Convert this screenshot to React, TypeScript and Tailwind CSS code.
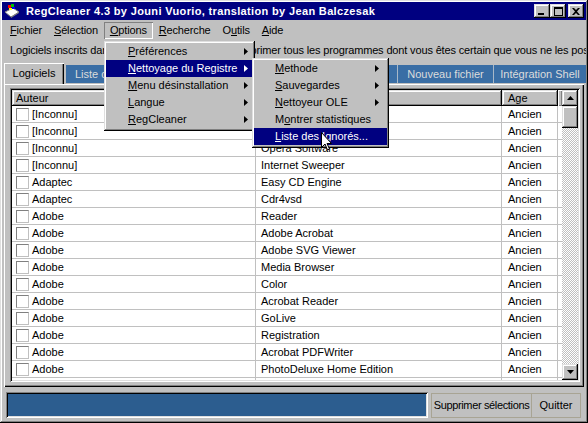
import React from "react";

// win98 bevels
const raised =
  "shadow-[inset_-1px_-1px_#000000,inset_1px_1px_#dfdfdf,inset_-2px_-2px_#808080,inset_2px_2px_#ffffff]";
const sunken =
  "shadow-[inset_1px_1px_#808080,inset_-1px_-1px_#ffffff,inset_2px_2px_#000000,inset_-2px_-2px_#dfdfdf]";
const thinRaised = "shadow-[inset_1px_1px_#ffffff,inset_-1px_-1px_#808080]";

function U({ children }: { children: React.ReactNode }) {
  return <span className="underline decoration-1 underline-offset-[1px]">{children}</span>;
}

function Arrow({ light }: { light?: boolean }) {
  return (
    <svg width="4" height="7" viewBox="0 0 4 7" className="shrink-0">
      <path d="M0 0 L4 3.5 L0 7 Z" fill={light ? "#ffffff" : "#000000"} />
    </svg>
  );
}

const rows: [string, string][] = [
  ["[Inconnu]", "Netscape Navigator"],
  ["[Inconnu]", "WinZip"],
  ["[Inconnu]", "Opera Software"],
  ["[Inconnu]", "Internet Sweeper"],
  ["Adaptec", "Easy CD Engine"],
  ["Adaptec", "Cdr4vsd"],
  ["Adobe", "Reader"],
  ["Adobe", "Adobe Acrobat"],
  ["Adobe", "Adobe SVG Viewer"],
  ["Adobe", "Media Browser"],
  ["Adobe", "Color"],
  ["Adobe", "Acrobat Reader"],
  ["Adobe", "GoLive"],
  ["Adobe", "Registration"],
  ["Adobe", "Acrobat PDFWriter"],
  ["Adobe", "PhotoDeluxe Home Edition"],
  ["Adobe", "Photoshop"],
];

const optionsItems: { label: React.ReactNode; active?: boolean }[] = [
  { label: <><U>P</U>références</> },
  { label: <><U>N</U>ettoyage du Registre</>, active: true },
  { label: <><U>M</U>enu désinstallation</> },
  { label: <><U>L</U>angue</> },
  { label: <><U>R</U>egCleaner</> },
];

const subItems: { label: React.ReactNode; arrow?: boolean; active?: boolean }[] = [
  { label: <><U>M</U>ethode</>, arrow: true },
  { label: <><U>S</U>auvegardes</>, arrow: true },
  { label: <><U>N</U>ettoyeur OLE</>, arrow: true },
  { label: <>M<U>o</U>ntrer statistiques</> },
  { label: <><U>L</U>iste des Ignorés...</>, active: true },
];

function TitleButton({ children }: { children: React.ReactNode }) {
  return (
    <div className={`w-[16px] h-[14px] bg-[#c0c0c0] flex items-center justify-center ${raised}`}>
      {children}
    </div>
  );
}

export default function App() {
  return (
    <div
      className={`relative w-[588px] h-[423px] overflow-hidden bg-[#c0c0c0] p-[2px] text-[11px] leading-none text-black font-['Liberation_Sans',Arial,sans-serif] ${raised}`}
    >
      {/* title bar */}
      <div className="h-[18px] bg-[#000080] flex items-center pl-[2px] pr-[2px]">
        <svg width="16" height="16" viewBox="0 0 16 16" className="shrink-0">
          <path d="M1 9 L9 5 L15 9 L7 14 Z" fill="#ffffff" stroke="#808080" strokeWidth="1" />
          <path d="M7 14 L15 9 L15 10 L7 15 Z" fill="#808080" />
          <rect x="4" y="2" width="3" height="3" fill="#ff0000" />
          <rect x="7" y="1" width="3" height="3" fill="#00c000" />
          <rect x="5" y="5" width="3" height="2" fill="#ffff00" />
          <rect x="8" y="4" width="3" height="2" fill="#0000ff" />
        </svg>
        <span className="ml-[6px] text-white font-bold text-[11px] tracking-[0.35px] whitespace-nowrap">
          RegCleaner 4.3 by Jouni Vuorio, translation by Jean Balczesak
        </span>
        <div className="ml-auto flex items-center">
          <TitleButton>
            <div className="w-[6px] h-[2px] bg-black mt-[6px] mr-[2px]" />
          </TitleButton>
          <TitleButton>
            <div className="w-[9px] h-[9px] border border-black border-t-2" />
          </TitleButton>
          <div className="w-[2px]" />
          <TitleButton>
            <svg width="8" height="7" viewBox="0 0 8 7">
              <path d="M0 0 H2 L4 2 L6 0 H8 L5 3.5 L8 7 H6 L4 5 L2 7 H0 L3 3.5 Z" fill="#000" />
            </svg>
          </TitleButton>
        </div>
      </div>

      {/* menu bar */}
      <div className="h-[20px] flex items-center pl-[2px] tracking-[-0.15px]">
        <div className="px-[6px] h-[17px] flex items-center"><U>F</U>ichier</div>
        <div className="px-[6px] h-[17px] flex items-center"><U>S</U>élection</div>
        <div className="px-[6px] h-[17px] flex items-center shadow-[inset_1px_1px_#808080,inset_-1px_-1px_#ffffff]"><U>O</U>ptions</div>
        <div className="px-[6px] h-[17px] flex items-center"><U>R</U>echerche</div>
        <div className="px-[6px] h-[17px] flex items-center">O<U>u</U>tils</div>
        <div className="px-[6px] h-[17px] flex items-center"><U>A</U>ide</div>
      </div>

      {/* info line */}
      <div className="h-[20px] flex items-center pl-[8px] whitespace-nowrap overflow-hidden tracking-[-0.15px]">
        Logiciels inscrits dans le registre. Vous pouvez supprimer tous les programmes dont vous êtes certain que vous ne les possédez plus.
      </div>

      {/* tabs */}
      <div className="h-[24px] flex items-end pl-[2px]">
        <div className="w-[60px] h-[21px] flex items-center justify-center bg-[#c0c0c0] shadow-[inset_1px_1px_#ffffff,inset_-1px_0_#000000,inset_-2px_0_#808080]">
          Logiciels
        </div>
        <div className="flex h-[18px] mb-[1px] bg-[#3a6ea5] text-[#dcdcdc] ml-[2px]">
          <div className="w-[106px] flex items-center pl-[9px] border-r border-[#a8b8c8]">Liste des ignorés</div>
          <div className="w-[96px] flex items-center pl-[9px] border-r border-[#a8b8c8]">Fichiers inutiles</div>
          <div className="w-[130px] flex items-center pl-[9px] border-r border-[#a8b8c8]">Démarrage</div>
          <div className="w-[96px] flex items-center justify-center border-r border-[#a8b8c8]">Nouveau fichier</div>
          <div className="w-[92px] flex items-center justify-center whitespace-nowrap">Intégration Shell</div>
        </div>
      </div>

      {/* tab panel */}
      <div className="h-[303px] mx-[2px] pl-[6px] pr-[4px] pt-[4px] shadow-[inset_1px_1px_#ffffff,inset_-1px_-1px_#000000,inset_-2px_-2px_#808080]">
        <div className={`h-[294px] bg-white p-[2px] flex ${sunken}`}>
          <div className="flex-1 flex flex-col overflow-hidden">
            <div className="h-[16px] flex shrink-0">
              <div className={`w-[244px] bg-[#c0c0c0] flex items-center pl-[4px] ${raised}`}>Auteur</div>
              <div className={`w-[246px] bg-[#c0c0c0] flex items-center pl-[5px] ${raised}`}>Nom</div>
              <div className={`w-[56px] bg-[#c0c0c0] flex items-center pl-[6px] ${raised}`}>Age</div>
              <div className={`flex-1 bg-[#c0c0c0] ${thinRaised}`} />
            </div>
            {rows.map(([author, name], i) => (
              <div key={i} className="h-[17px] flex shrink-0 border-b border-[#c0c0c0]">
                <div className="w-[244px] flex items-center pl-[4px] gap-[3px] border-r border-[#c0c0c0]">
                  <div className="w-[13px] h-[13px] bg-white border border-[#808080] border-b-[#c0c0c0] border-r-[#c0c0c0]" />
                  {author}
                </div>
                <div className="w-[246px] flex items-center pl-[5px] border-r border-[#c0c0c0]">{name}</div>
                <div className="w-[56px] flex items-center pl-[6px] border-r border-[#c0c0c0]">Ancien</div>
                <div className="flex-1" />
              </div>
            ))}
          </div>
          {/* scrollbar */}
          <div className="w-[16px] flex flex-col bg-[repeating-conic-gradient(#c0c0c0_0%_25%,#ffffff_0%_50%)] bg-size-[2px_2px]">
            <div className={`h-[16px] bg-[#c0c0c0] flex items-center justify-center ${raised}`}>
              <svg width="7" height="4" viewBox="0 0 7 4"><path d="M3.5 0 L7 4 H0 Z" fill="#000" /></svg>
            </div>
            <div className={`h-[22px] bg-[#c0c0c0] ${raised}`} />
            <div className="flex-1" />
            <div className={`h-[16px] bg-[#c0c0c0] flex items-center justify-center ${raised}`}>
              <svg width="7" height="4" viewBox="0 0 7 4"><path d="M0 0 H7 L3.5 4 Z" fill="#000" /></svg>
            </div>
          </div>
        </div>
      </div>

      {/* bottom bar */}
      <div className="mt-[5px] h-[27px] flex pl-[4px]">
        <div className={`w-[422px] h-[26px] bg-[#2c5d8f] ${sunken}`} />
        <div className="ml-[3px] flex h-[25px] mt-[1px] whitespace-nowrap">
          <div className="w-[101px] flex items-center justify-center border border-[#a8a494] tracking-[-0.35px]">Supprimer sélections</div>
          <div className="w-[49px] flex items-center justify-center border border-l-0 border-[#a8a494]">Quitter</div>
        </div>
      </div>

      {/* Options dropdown */}
      <div className={`absolute left-[104px] top-[41px] w-[151px] h-[90px] bg-[#c0c0c0] p-[2px] ${raised}`}>
        {optionsItems.map((it, i) => (
          <div
            key={i}
            className={`h-[17px] flex items-center pl-[22px] pr-[5px] ${it.active ? "bg-[#000080] text-white" : ""}`}
          >
            <span className="flex-1 whitespace-nowrap">{it.label}</span>
            <Arrow light={it.active} />
          </div>
        ))}
      </div>

      {/* submenu */}
      <div className={`absolute left-[252px] top-[58px] w-[137px] h-[90px] bg-[#c0c0c0] p-[2px] ${raised}`}>
        {subItems.map((it, i) => (
          <div
            key={i}
            className={`h-[17px] flex items-center pl-[21px] pr-[8px] ${it.active ? "bg-[#000080] text-white" : ""}`}
          >
            <span className="flex-1 whitespace-nowrap">{it.label}</span>
            {it.arrow && <Arrow />}
          </div>
        ))}
      </div>

      {/* mouse pointer */}
      <svg width="12" height="19" viewBox="0 0 12 19" className="absolute left-[321px] top-[132px]">
        <path d="M0.5 0.5 L0.5 15.5 L4 12 L6.5 18 L8.5 17 L6 11.5 L10.5 11.5 Z" fill="#ffffff" stroke="#000000" strokeWidth="1" />
      </svg>
    </div>
  );
}
